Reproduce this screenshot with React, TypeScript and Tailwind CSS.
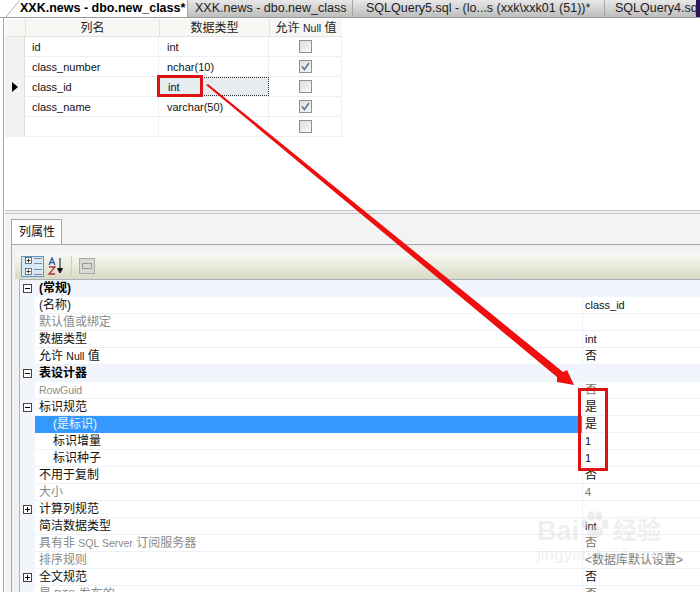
const cjk = "font-['Tahoma','Liberation_Sans','Noto_Sans_CJK_SC',sans-serif]";

const tabs = [
  { label: "XXK.news - dbo.new_class*", w: "w-[169px]", pad: "pl-[2px]", active: true },
  { label: "XXK.news - dbo.new_class", w: "w-[165px]", pad: "pl-[7px]", active: false },
  { label: "SQLQuery5.sql - (lo...s (xxk\\xxk01 (51))*", w: "w-[252px]", pad: "pl-[13px]", active: false },
  { label: "SQLQuery4.sql", w: "w-[92px]", pad: "pl-[10px]", active: false },
];

const columns = [
  { name: "id", type: "int", nullable: false },
  { name: "class_number", type: "nchar(10)", nullable: true },
  { name: "class_id", type: "int", nullable: false, current: true },
  { name: "class_name", type: "varchar(50)", nullable: true },
  { name: "", type: "", nullable: false },
];

type Prop = {
  label: string;
  value?: string;
  kind?: "group" | "muted" | "selected" | "child";
  toggle?: "minus" | "plus";
  valueMuted?: boolean;
};

const props: Prop[] = [
  { label: "(常规)", kind: "group", toggle: "minus" },
  { label: "(名称)", value: "class_id" },
  { label: "默认值或绑定", kind: "muted" },
  { label: "数据类型", value: "int" },
  { label: "允许 Null 值", value: "否" },
  { label: "表设计器", kind: "group", toggle: "minus" },
  { label: "RowGuid", kind: "muted", value: "否", valueMuted: true },
  { label: "标识规范", value: "是", toggle: "minus" },
  { label: "(是标识)", value: "是", kind: "selected" },
  { label: "标识增量", value: "1", kind: "child" },
  { label: "标识种子", value: "1", kind: "child" },
  { label: "不用于复制", value: "否" },
  { label: "大小", kind: "muted", value: "4", valueMuted: true },
  { label: "计算列规范", toggle: "plus" },
  { label: "简洁数据类型", value: "int" },
  { label: "具有非 SQL Server 订阅服务器", kind: "muted", value: "否", valueMuted: true },
  { label: "排序规则", kind: "muted", value: "<数据库默认设置>", valueMuted: true },
  { label: "全文规范", value: "否", toggle: "plus" },
  { label: "是 DTS 发布的", kind: "muted", value: "否", valueMuted: true },
];

// latin runs are set a bit smaller than the chinese around them
function Mixed({ text }: { text: string }) {
  return (
    <>
      {text.split(/([A-Za-z][A-Za-z ]*[A-Za-z])/).map((part, i) =>
        i % 2 === 1 ? (
          <span key={i} className="text-[10.5px]">
            {part}
          </span>
        ) : (
          <span key={i}>{part}</span>
        )
      )}
    </>
  );
}

function Toggle({ type }: { type: "minus" | "plus" }) {
  return (
    <div className="relative h-[9px] w-[9px] border border-[#444] bg-white">
      <div className="absolute left-[1px] top-[3px] h-px w-[5px] bg-black" />
      {type === "plus" && <div className="absolute left-[3px] top-[1px] h-[5px] w-px bg-black" />}
    </div>
  );
}

function Check({ on }: { on: boolean }) {
  return (
    <div className="flex h-[13px] w-[13px] items-center justify-center border border-[#8f8f8f] bg-gradient-to-br from-[#dcdcdc] to-[#fafafa]">
      {on && (
        <svg width="9" height="9" viewBox="0 0 9 9">
          <path d="M1 4.5 L3.5 7.5 L8 1" fill="none" stroke="#5a70a0" strokeWidth="1.5" />
        </svg>
      )}
    </div>
  );
}

function Annotations() {
  return (
    <>
      <div className="absolute left-[157px] top-[75px] h-[22px] w-[46px] border-[3px] border-[#dd1111]" />
      <div className="absolute left-[578px] top-[388px] h-[83px] w-[30px] border-[3px] border-[#dd1111]" />
      <svg className="absolute left-0 top-0" width="700" height="592">
        <polygon points="206,85 208,84 563,372 567,370 574,385 557,382 557,377" fill="#ee0f0f" />
      </svg>
    </>
  );
}

function Watermark() {
  return (
    <div className="pointer-events-none absolute left-[537px] top-[516px] opacity-40">
      <div className="flex items-center font-['Liberation_Sans','Noto_Sans_CJK_SC',sans-serif] text-[27px] font-bold leading-[30px] text-[#d9d9d9]">
        <span>Bai</span>
        <svg width="32" height="32" viewBox="0 0 32 32" className="-mx-px -mt-3">
          <g fill="#d5d5d5">
            <ellipse cx="7" cy="15" rx="3.5" ry="5" />
            <ellipse cx="13" cy="7" rx="3.5" ry="5" />
            <ellipse cx="21" cy="7" rx="3.5" ry="5" />
            <ellipse cx="27" cy="15" rx="3.5" ry="5" />
            <ellipse cx="17" cy="23" rx="8" ry="6.5" />
          </g>
        </svg>
        <span className="ml-1 text-[24px]">经验</span>
      </div>
      <div className="font-['Liberation_Sans',sans-serif] text-[17px] leading-[18px] text-[#d9d9d9]">jingyan.baidu.com</div>
    </div>
  );
}

export default function App() {
  return (
    <div className={`relative h-[592px] w-[700px] overflow-hidden bg-white text-[11px] text-[#111] ${cjk}`}>
      {/* document tabs */}
      <div className="relative flex h-[18px] border-b border-[#9a9a9a] bg-white pl-[18px]">
        <svg className="absolute left-[5px] top-0" width="15" height="18">
          <path d="M0.5 17.5 L14.5 0.5" stroke="#b0b0b0" fill="none" />
        </svg>
        {tabs.map((tab) => (
          <div
            key={tab.label}
            className={`flex shrink-0 items-center overflow-hidden whitespace-nowrap text-[12.5px] leading-[17px] ${tab.w} ${tab.pad} ${
              tab.active
                ? "bg-white font-bold text-black"
                : "border-l border-[#a5a5a5] bg-gradient-to-b from-[#e8e8e8] to-[#bdbdbd] text-[#222]"
            }`}
          >
            {tab.label}
          </div>
        ))}
        <div className="flex-1 bg-[#2f1458]" />
      </div>

      <div className="ml-[3px] flex h-[574px] flex-col border-l border-l-[#a8a8a8] pl-px">
        {/* table designer grid */}
        <div className="h-[192px] pt-px">
          <div className="flex h-[18px] w-[337px] border-b border-[#e4e4e4] bg-[#f7f7f3] text-[12px] leading-[18px] text-[#222]">
            <div className="w-[20px]" />
            <div className="w-[134px] border-l border-[#e2e2e2] text-center">列名</div>
            <div className="w-[110px] border-l border-[#e2e2e2] text-center">数据类型</div>
            <div className="w-[73px] border-l border-[#e2e2e2] text-center">
              <Mixed text="允许 Null 值" />
            </div>
          </div>
          {columns.map((col, i) => (
            <div key={i} className="flex h-[20px] w-[337px] border-b border-[#ecf0f2] leading-[20px]">
              <div className="flex w-[20px] items-center justify-center border-r border-[#ddd] bg-[#f2f2ee]">
                {col.current && (
                  <svg width="6" height="10" viewBox="0 0 6 10">
                    <path d="M0 0 L6 5 L0 10 Z" fill="#000" />
                  </svg>
                )}
              </div>
              <div className="w-[134px] border-r border-[#ecf0f2] pl-[7px]">{col.name}</div>
              <div
                className={`w-[110px] pl-[8px] ${
                  col.current ? "border border-dotted border-[#333] bg-[#e6ecf0] leading-[18px]" : "border-r border-[#ecf0f2]"
                }`}
              >
                {col.type}
              </div>
              <div className="flex w-[73px] items-center justify-center border-r border-[#ecf0f2]">
                <Check on={col.nullable} />
              </div>
            </div>
          ))}
        </div>

        {/* splitter */}
        <div className="h-[4px] border-y border-[#c4c4c4] bg-[#f0f0f0]" />

        {/* column properties */}
        <div className="flex min-h-0 flex-1 flex-col bg-[#f3f3f3] pl-[6px]">
          <div className="h-[5px]" />
          <div className="flex h-[25px] w-[51px] items-center border border-b-0 border-[#a8a8a8] bg-white pl-[7px] text-[12px]">
            列属性
          </div>
          <div className="flex min-h-0 flex-1 flex-col border-l border-t border-[#a8a8a8] bg-[#f1f1f1] pl-[3px] pt-[8px]">
            <div className="flex h-[26px] items-center gap-[3px] bg-gradient-to-b from-[#fafaf6] to-[#d9d9c6] pl-[6px]">
              <div className="flex h-[21px] w-[23px] flex-col items-center justify-center gap-[2px] border border-[#5f95c8] bg-[#d7e8f7]">
                {[0, 1].map((n) => (
                  <div key={n} className="flex items-center gap-px">
                    <div className="scale-75">
                      <Toggle type="plus" />
                    </div>
                    <div className="h-[6px] w-[8px] border-y border-[#888]" />
                  </div>
                ))}
              </div>
              <svg width="18" height="18" viewBox="0 0 18 18">
                <path d="M2 8 L5 1 L8 8 M3.2 5.6 H6.8" fill="none" stroke="#2c5aa8" strokeWidth="1.3" />
                <path d="M2 10 H8 L2 17 H8" fill="none" stroke="#b03030" strokeWidth="1.3" />
                <path d="M13 1 V14 M10.5 11.5 L13 16 L15.5 11.5 Z" fill="#111" stroke="#111" />
              </svg>
              <div className="ml-[3px] h-[20px] w-px bg-[#d0d0c0]" />
              <div className="ml-[4px] h-[16px] w-[16px] border border-[#aaa] bg-[#d8d8d4]">
                <div className="mx-auto mt-[4px] h-[6px] w-[10px] border border-[#999]" />
              </div>
            </div>
            <div className="ml-[4px] min-h-0 flex-1 overflow-hidden border-l border-t border-[#a8b4c0] bg-white">
              {props.map((p) => {
                const group = p.kind === "group";
                const selected = p.kind === "selected";
                const muted = p.kind === "muted";
                const indent = selected || p.kind === "child";
                return (
                  <div key={p.label} className={`flex h-[17px] leading-[17px] ${group ? "bg-[#f2f6fc]" : ""}`}>
                    <div className="flex w-[15px] shrink-0 items-center justify-center bg-[#f2f6fc]">
                      {p.toggle && <Toggle type={p.toggle} />}
                    </div>
                    <div
                      className={`w-[547px] shrink-0 border-b text-[12px] ${indent ? "pl-[18px]" : "pl-[4px]"} ${
                        selected ? "border-[#3399ff] bg-[#3399ff] text-[#f4f4f4]" : "border-[#edf1f5]"
                      } ${group ? "border-transparent font-bold text-black" : ""} ${muted ? "text-[#8a8a8a]" : ""}`}
                    >
                      <Mixed text={p.label} />
                    </div>
                    <div
                      className={`flex-1 whitespace-nowrap border-b border-l pl-[2px] ${
                        group ? "border-transparent" : "border-[#edf1f5]"
                      } ${p.valueMuted ? "text-[#777]" : ""} ${p.value && /[^\x00-\x7f]/.test(p.value) ? "text-[12px]" : ""}`}
                    >
                      {p.value}
                    </div>
                  </div>
                );
              })}
            </div>
          </div>
        </div>
      </div>

      <Watermark />
      <Annotations />
    </div>
  );
}
